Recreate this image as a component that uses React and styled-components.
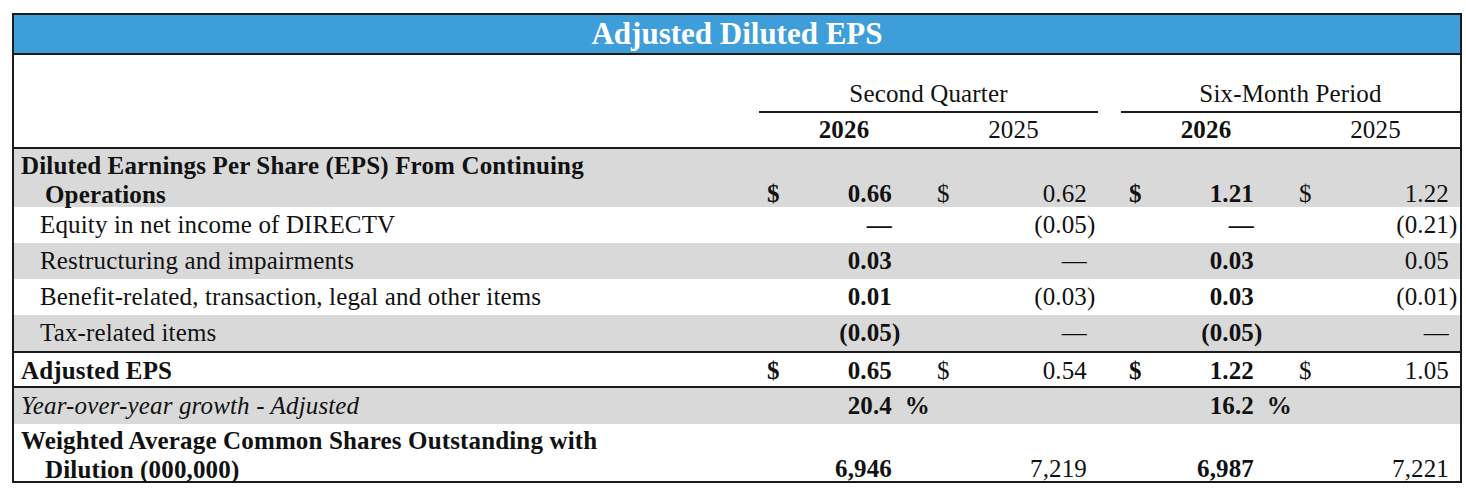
import React from "react";
import styled, { createGlobalStyle } from "styled-components";

const Global = createGlobalStyle`
  html, body { margin: 0; padding: 0; background: #ffffff; }
  body { font-family: "Liberation Serif", "Times New Roman", serif; color: #111; }
`;

const COLS = "745px 170px 169px 23px 170px 169px";
const FS = "25px";
const LS = "0.15px";

const Page = styled.div`
  padding: 13px 0 0 12px;
`;

const Frame = styled.div`
  box-sizing: border-box;
  width: 1450px;
  border: 2px solid #1b1b1b;
  font-size: ${FS};
  letter-spacing: ${LS};
`;

const TitleBar = styled.div`
  height: 38px;
  line-height: 38px;
  background: #3e9eda;
  color: #ffffff;
  font-weight: bold;
  font-size: 31px;
  letter-spacing: 0;
  text-align: center;
  border-bottom: 2px solid #1b1b1b;
`;

const Header = styled.div`
  display: grid;
  grid-template-columns: ${COLS};
  grid-template-rows: 58px 34px;
  border-bottom: 2px solid #1b1b1b;
`;

const GroupTitle = styled.div`
  grid-column: ${(p) => p.$col} / span 2;
  grid-row: 1;
  align-self: end;
  text-align: center;
  line-height: 29px;
  padding-bottom: 3px;
  border-bottom: 2px solid #1b1b1b;
`;

const Year = styled.div`
  grid-row: 2;
  grid-column: ${(p) => p.$col};
  text-align: center;
  line-height: 34px;
  font-weight: ${(p) => (p.$bold ? "bold" : "normal")};
`;

const Row = styled.div`
  display: grid;
  grid-template-columns: ${COLS};
  height: ${(p) => p.$h || 36}px;
  background: ${(p) => (p.$shade ? "#d9d9d9" : "#ffffff")};
  border-top: ${(p) => (p.$rule ? "2px solid #1b1b1b" : "none")};
  align-items: ${(p) => (p.$tall ? "end" : "center")};
`;

const Label = styled.div`
  box-sizing: border-box;
  padding: ${(p) => (p.$tall ? 2 : 0)}px 130px 0 ${(p) => (p.$indent ? 26 : p.$tall ? 31 : 7)}px;
  text-indent: ${(p) => (p.$tall ? -24 : 0)}px;
  line-height: ${(p) => (p.$tall ? 29 : 36)}px;
  font-weight: ${(p) => (p.$bold ? "bold" : "normal")};
  font-style: ${(p) => (p.$italic ? "italic" : "normal")};
  align-self: center;
`;

const Cell = styled.div`
  box-sizing: border-box;
  display: flex;
  justify-content: space-between;
  align-items: baseline;
  padding: 0 ${(p) => (p.$current ? 37 : 11)}px ${(p) => (p.$tall ? 1 : 0)}px 8px;
  line-height: ${(p) => (p.$tall ? 29 : 36)}px;
  font-weight: ${(p) => (p.$current ? "bold" : "normal")};
  white-space: nowrap;
`;

const Dollar = styled.span``;

const Num = styled.span`
  margin-left: auto;
`;

const Hang = styled.span`
  display: inline-block;
  width: 0;
  white-space: pre;
  overflow: visible;
`;

const Spacer = styled.div``;

function renderNum(v) {
  if (!v) return null;
  if (v.endsWith(")")) {
    return (
      <>
        {v.slice(0, -1)}
        <Hang>)</Hang>
      </>
    );
  }
  if (v.endsWith("%")) {
    return (
      <>
        {v.replace(/\s*%$/, "")}
        <Hang>{"  %"}</Hang>
      </>
    );
  }
  return v;
}

function Value({ v, dollar, current, tall }) {
  return (
    <Cell $current={current} $tall={tall}>
      {dollar ? <Dollar>$</Dollar> : <span />}
      <Num>{renderNum(v)}</Num>
    </Cell>
  );
}

const rows = [
  {
    label: "Diluted Earnings Per Share (EPS) From Continuing Operations",
    bold: true,
    tall: true,
    h: 58,
    shade: true,
    dollar: true,
    vals: ["0.66", "0.62", "1.21", "1.22"],
  },
  { label: "Equity in net income of DIRECTV", indent: true, vals: ["—", "(0.05)", "—", "(0.21)"] },
  { label: "Restructuring and impairments", indent: true, shade: true, vals: ["0.03", "—", "0.03", "0.05"] },
  {
    label: "Benefit-related, transaction, legal and other items",
    indent: true,
    vals: ["0.01", "(0.03)", "0.03", "(0.01)"],
  },
  { label: "Tax-related items", indent: true, shade: true, vals: ["(0.05)", "—", "(0.05)", "—"] },
  { label: "Adjusted EPS", bold: true, rule: true, h: 33, dollar: true, vals: ["0.65", "0.54", "1.22", "1.05"] },
  {
    label: "Year-over-year growth - Adjusted",
    italic: true,
    rule: true,
    shade: true,
    vals: ["20.4 %", "", "16.2 %", ""],
  },
  {
    label: "Weighted Average Common Shares Outstanding with Dilution (000,000)",
    bold: true,
    tall: true,
    h: 57,
    vals: ["6,946", "7,219", "6,987", "7,221"],
  },
];

export default function App() {
  return (
    <>
      <Global />
      <Page>
        <Frame>
          <TitleBar>Adjusted Diluted EPS</TitleBar>
          <Header>
            <GroupTitle $col={2}>Second Quarter</GroupTitle>
            <GroupTitle $col={5}>Six-Month Period</GroupTitle>
            <Year $col={2} $bold>2026</Year>
            <Year $col={3}>2025</Year>
            <Year $col={5} $bold>2026</Year>
            <Year $col={6}>2025</Year>
          </Header>
          {rows.map((r, i) => (
            <Row key={i} $h={r.h} $shade={r.shade} $rule={r.rule} $tall={r.tall}>
              <Label $indent={r.indent} $tall={r.tall} $bold={r.bold} $italic={r.italic}>
                {r.label}
              </Label>
              <Value v={r.vals[0]} dollar={r.dollar} current tall={r.tall} />
              <Value v={r.vals[1]} dollar={r.dollar} tall={r.tall} />
              <Spacer />
              <Value v={r.vals[2]} dollar={r.dollar} current tall={r.tall} />
              <Value v={r.vals[3]} dollar={r.dollar} tall={r.tall} />
            </Row>
          ))}
        </Frame>
      </Page>
    </>
  );
}
